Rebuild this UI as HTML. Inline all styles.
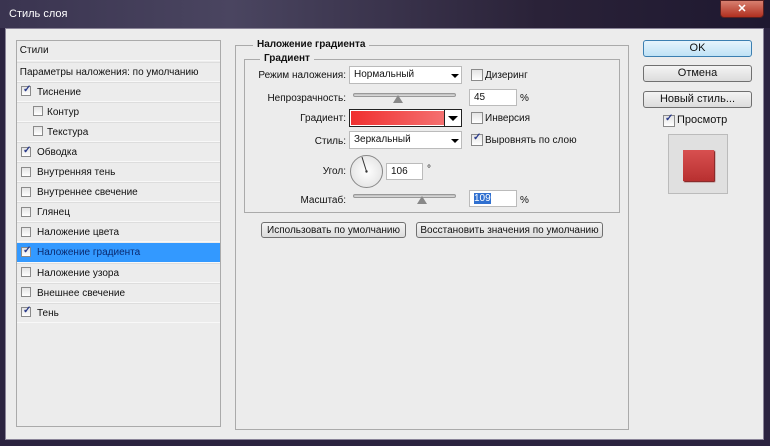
<!DOCTYPE html>
<html><head><meta charset="utf-8"><style>
*{margin:0;padding:0;box-sizing:border-box}
body{width:770px;height:446px;overflow:hidden;background:#2b2340;font-family:"Liberation Sans",sans-serif;font-size:10px;color:#111;position:relative}
.a{position:absolute}
.title{left:0;top:0;width:770px;height:28px;background:linear-gradient(90deg,#3a3450 0%,#4a4560 30%,#2a2238 70%,#1e1830 100%)}
.body{left:5px;top:28px;width:759px;height:412px;background:#ececec;border:1px solid #8a8498}
.cb{width:10px;height:10px;border:1px solid #8a8a8a;background:linear-gradient(#e4e4e4,#fff)}
.ck:after{content:"✓";position:absolute;left:1px;top:-3px;font-size:10px;color:#2a3a8a;font-weight:bold}
.row{left:17px;width:203px;height:20px;border-bottom:1px solid #f8f8f8;border-top:1px solid #ddd;line-height:19px}
.btn{border:1px solid #707070;border-radius:3px;background:linear-gradient(#f4f4f4,#dcdcdc);text-align:center;font-size:11px;line-height:15px}
.inp{background:#fff;border:1px solid #bbb;line-height:18px;padding-left:4px}
.lbl{text-align:right;width:110px;left:236px}
.slider{height:4px;border:1px solid #999;border-radius:2px;background:linear-gradient(#bbb,#ddd)}
.thumb{width:0;height:0;border-left:5px solid transparent;border-right:5px solid transparent;border-bottom:8px solid #888}
.arrow{width:0;height:0;border-left:4px solid transparent;border-right:4px solid transparent;border-top:4px solid #000}
</style></head><body>
<div class="a title"></div>
<div class="a" style="left:9px;top:8px;color:#fff;font-size:11px">Стиль слоя</div>
<div class="a" style="left:720px;top:0;width:44px;height:18px;border-radius:0 0 4px 4px;background:linear-gradient(#d88070,#b03020);border:1px solid #5a2020;color:#fff;text-align:center;font-weight:bold;font-size:11px;line-height:16px">✕</div>
<div class="a body"></div>
<div class="a" style="left:16px;top:40px;width:205px;height:387px;border:1px solid #aaa;background:#ececec"></div>
<div class="a row" style="top:41px;border-top:none">&nbsp;Стили</div>
<div class="a row" style="top:62px">&nbsp;Параметры наложения: по умолчанию</div>
<div class="a row" style="top:82px;padding-left:20px">Тиснение</div><div class="a cb ck" style="left:21px;top:86px"></div>
<div class="a row" style="top:102px;padding-left:30px">Контур</div><div class="a cb" style="left:33px;top:106px"></div>
<div class="a row" style="top:122px;padding-left:30px">Текстура</div><div class="a cb" style="left:33px;top:126px"></div>
<div class="a row" style="top:142px;padding-left:20px">Обводка</div><div class="a cb ck" style="left:21px;top:147px"></div>
<div class="a row" style="top:162px;padding-left:20px">Внутренняя тень</div><div class="a cb" style="left:21px;top:167px"></div>
<div class="a row" style="top:182px;padding-left:20px">Внутреннее свечение</div><div class="a cb" style="left:21px;top:187px"></div>
<div class="a row" style="top:202px;padding-left:20px">Глянец</div><div class="a cb" style="left:21px;top:207px"></div>
<div class="a row" style="top:222px;padding-left:20px">Наложение цвета</div><div class="a cb" style="left:21px;top:227px"></div>
<div class="a row" style="top:243px;padding-left:20px;background:#3399ff;color:#0a2a70;border-top:none">Наложение градиента</div><div class="a cb ck" style="left:21px;top:247px"></div>
<div class="a row" style="top:263px;padding-left:20px">Наложение узора</div><div class="a cb" style="left:21px;top:267px"></div>
<div class="a row" style="top:283px;padding-left:20px">Внешнее свечение</div><div class="a cb" style="left:21px;top:287px"></div>
<div class="a row" style="top:303px;padding-left:20px">Тень</div><div class="a cb ck" style="left:21px;top:307px"></div>
<div class="a" style="left:235px;top:45px;width:394px;height:385px;border:1px solid #aaa"></div>
<div class="a" style="left:253px;top:39px;background:#ececec;padding:0 4px;font-weight:bold">Наложение градиента</div>
<div class="a" style="left:244px;top:59px;width:376px;height:154px;border:1px solid #aaa"></div>
<div class="a" style="left:260px;top:53px;background:#ececec;padding:0 4px;font-weight:bold">Градиент</div>
<div class="a lbl" style="top:70px">Режим наложения:</div>
<div class="a inp" style="left:349px;top:66px;width:113px;height:18px;line-height:16px">Нормальный</div><div class="a arrow" style="left:451px;top:74px"></div>
<div class="a cb" style="left:471px;top:69px;width:12px;height:12px"></div><div class="a" style="left:485px;top:70px">Дизеринг</div>
<div class="a lbl" style="top:93px">Непрозрачность:</div>
<div class="a slider" style="left:353px;top:93px;width:103px"></div><div class="a thumb" style="left:393px;top:95px"></div>
<div class="a inp" style="left:469px;top:89px;width:48px;height:17px;line-height:15px">45</div><div class="a" style="left:520px;top:93px">%</div>
<div class="a lbl" style="top:113px">Градиент:</div>
<div class="a" style="left:349px;top:109px;width:113px;height:18px;border:1px solid #222;background:#fff"></div>
<div class="a" style="left:351px;top:111px;width:93px;height:14px;background:linear-gradient(90deg,#f03030,#f47070)"></div>
<div class="a" style="left:444px;top:110px;width:1px;height:16px;background:#222"></div>
<div class="a arrow" style="left:448px;top:116px;border-width:5px 5px 0"></div>
<div class="a cb" style="left:471px;top:112px;width:12px;height:12px"></div><div class="a" style="left:485px;top:113px">Инверсия</div>
<div class="a lbl" style="top:136px">Стиль:</div>
<div class="a inp" style="left:349px;top:131px;width:113px;height:18px;line-height:16px">Зеркальный</div><div class="a arrow" style="left:451px;top:139px"></div>
<div class="a cb ck" style="left:471px;top:134px;width:12px;height:12px"></div><div class="a" style="left:485px;top:135px">Выровнять по слою</div>
<div class="a lbl" style="top:166px">Угол:</div>
<div class="a" style="left:350px;top:155px;width:33px;height:33px;border-radius:50%;border:1px solid #888;background:radial-gradient(#fff,#ddd)"></div>
<svg class="a" style="left:350px;top:155px" width="33" height="33"><line x1="16.5" y1="16.5" x2="12" y2="2" stroke="#333" stroke-width="1"/><circle cx="16.5" cy="16.5" r="1.2" fill="#333"/></svg>
<div class="a inp" style="left:386px;top:163px;width:37px;height:17px;line-height:15px">106</div><div class="a" style="left:427px;top:164px">°</div>
<div class="a lbl" style="top:195px">Масштаб:</div>
<div class="a slider" style="left:353px;top:194px;width:103px"></div><div class="a thumb" style="left:417px;top:196px"></div>
<div class="a inp" style="left:469px;top:190px;width:48px;height:17px;line-height:15px"><span style="background:#3070d0;color:#fff">109</span></div><div class="a" style="left:520px;top:195px">%</div>
<div class="a btn" style="left:261px;top:222px;width:145px;height:16px;font-size:10px">Использовать по умолчанию</div>
<div class="a btn" style="left:416px;top:222px;width:187px;height:16px;font-size:10px">Восстановить значения по умолчанию</div>
<div class="a btn" style="left:643px;top:40px;width:109px;height:17px;border-color:#3c7fb1;background:linear-gradient(#e6f4fc,#bfe2f6)">OK</div>
<div class="a btn" style="left:643px;top:65px;width:109px;height:17px">Отмена</div>
<div class="a btn" style="left:643px;top:91px;width:109px;height:17px">Новый стиль...</div>
<div class="a cb ck" style="left:663px;top:115px;width:12px;height:12px"></div><div class="a" style="left:677px;top:114px;font-size:11px">Просмотр</div>
<div class="a" style="left:668px;top:134px;width:60px;height:60px;border:1px solid #bbb;background:#e0e0e0"></div>
<div class="a" style="left:683px;top:150px;width:31px;height:31px;background:linear-gradient(#d85050,#b83030);box-shadow:1px 1px 1px #700"></div>
</body></html>
